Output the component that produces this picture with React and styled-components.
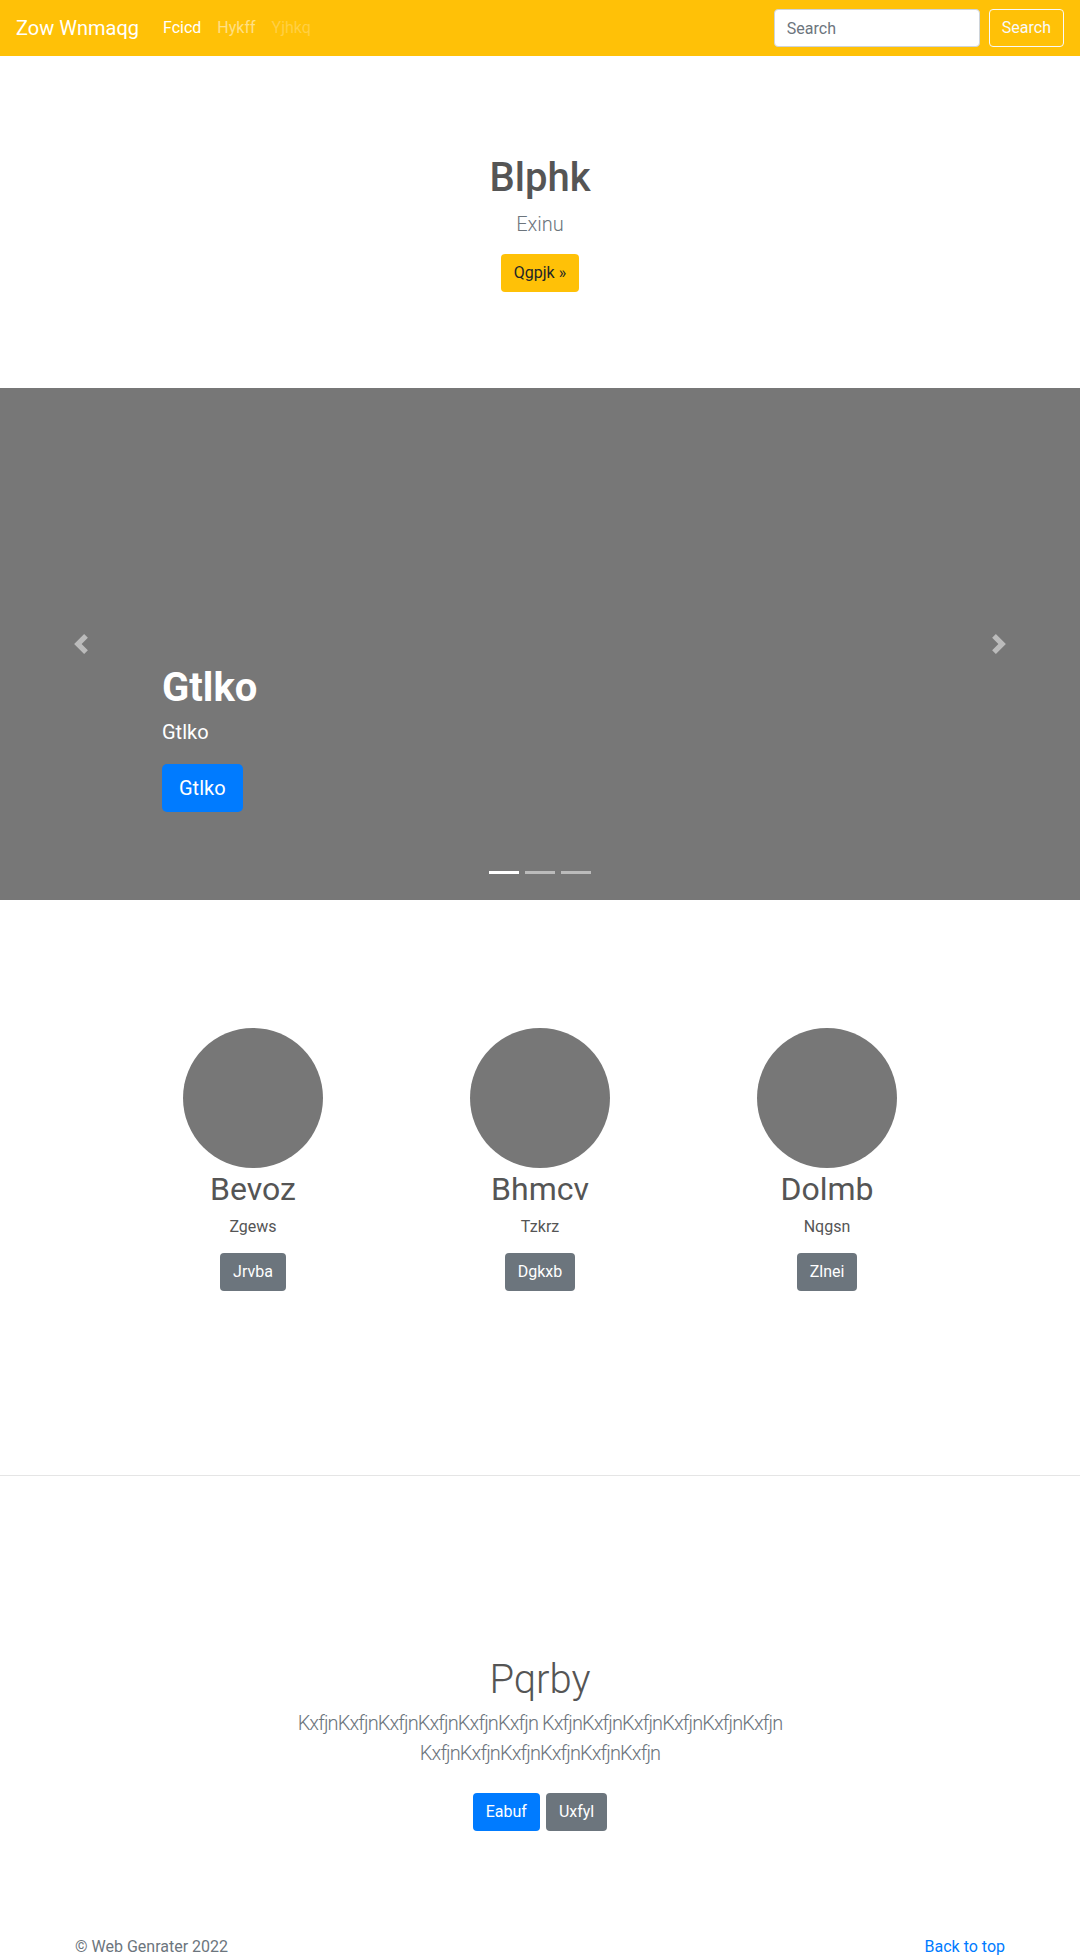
import styled, { createGlobalStyle } from "styled-components"

const GlobalStyle = createGlobalStyle`
  * { box-sizing: border-box; }
  body {
    margin: 0;
    font-family: "Segoe UI", Roboto, "Noto Sans", "Liberation Sans", sans-serif;
    font-size: 16px;
    line-height: 1.5;
    color: #555;
    background: #fff;
  }
`

const Navbar = styled.nav`
  display: flex;
  align-items: center;
  height: 56px;
  padding: 8px 16px;
  background: #ffc107;
`
const Brand = styled.a`
  font-size: 20px;
  line-height: 30px;
  color: #fff;
  margin-right: 16px;
  text-decoration: none;
`
const NavList = styled.ul`
  display: flex;
  list-style: none;
  margin: 0;
  padding: 0;
  flex: 1;
`
const NavLink = styled.a`
  display: block;
  padding: 8px;
  line-height: 24px;
  text-decoration: none;
  color: ${p => (p.$state === "active" ? "#fff" : p.$state === "disabled" ? "rgba(255,255,255,.25)" : "rgba(255,255,255,.5)")};
`
const SearchForm = styled.form`
  display: flex;
  align-items: center;
  gap: 9px;
`
const SearchInput = styled.input`
  width: 206px;
  height: 38px;
  padding: 6px 12px;
  font: inherit;
  color: #495057;
  border: 1px solid #ced4da;
  border-radius: 4px;
  background: #fff;
  &::placeholder { color: #6c757d; }
`
const OutlineButton = styled.button`
  height: 38px;
  padding: 6px 12px;
  font: inherit;
  line-height: 24px;
  color: #f8f9fa;
  background: transparent;
  border: 1px solid #f8f9fa;
  border-radius: 4px;
`

const Button = styled.a`
  display: inline-block;
  padding: ${p => (p.$lg ? "8px 16px" : "6px 12px")};
  font-size: ${p => (p.$lg ? "20px" : "16px")};
  line-height: ${p => (p.$lg ? "30px" : "24px")};
  border: 1px solid transparent;
  border-radius: ${p => (p.$lg ? "5px" : "4px")};
  text-decoration: none;
  color: ${p => (p.$variant === "warning" ? "#212529" : "#fff")};
  background: ${p => ({ warning: "#ffc107", primary: "#007bff", secondary: "#6c757d" }[p.$variant])};
`

const Hero = styled.section`
  display: flex;
  flex-direction: column;
  align-items: center;
  padding: 98px 15px 96px;
  text-align: center;
`
const HeroTitle = styled.h1`
  margin: 0 0 7px;
  font-size: 40px;
  line-height: 48px;
  font-weight: 500;
  color: #555;
`
const Lead = styled.p`
  margin: 0 0 ${p => p.$mb || 15}px;
  font-size: 20px;
  line-height: 30px;
  font-weight: 300;
  color: #6c757d;
  letter-spacing: ${p => p.$tight ? "-0.9px" : "normal"};
`

const Carousel = styled.div`
  position: relative;
  height: 512px;
  background: #777;
`
const Caption = styled.div`
  position: absolute;
  left: 15%;
  right: 15%;
  bottom: 88px;
  color: #fff;
`
const CaptionTitle = styled.h1`
  margin: 0 0 5px;
  font-size: 40px;
  line-height: 48px;
  font-weight: 700;
`
const CaptionText = styled.p`
  margin: 0 0 17px;
  font-size: 20px;
  line-height: 30px;
`
const Control = styled.a`
  position: absolute;
  top: 0;
  bottom: 0;
  ${p => (p.$side === "left" ? "left: 0;" : "right: 0;")}
  width: 15%;
  display: flex;
  align-items: center;
  justify-content: center;
  opacity: .5;
  svg { width: 20px; height: 20px; }
`
const Indicators = styled.ol`
  position: absolute;
  left: 0;
  right: 0;
  bottom: 26px;
  display: flex;
  justify-content: center;
  gap: 6px;
  list-style: none;
  margin: 0;
  padding: 0;
`
const Indicator = styled.li`
  width: 30px;
  height: 3px;
  background: #fff;
  opacity: ${p => (p.$active ? 1 : 0.5)};
`

const Marketing = styled.section`
  padding: 128px 0 184px;
  border-bottom: 1px solid rgba(0, 0, 0, .1);
`
const Columns = styled.div`
  display: grid;
  grid-template-columns: repeat(3, 1fr);
  width: 861px;
  margin: 0 auto;
`
const Column = styled.div`
  display: flex;
  flex-direction: column;
  align-items: center;
  text-align: center;
`
const Avatar = styled.div`
  width: 140px;
  height: 140px;
  border-radius: 50%;
  background: #777;
`
const ColTitle = styled.h2`
  margin: 2px 0 0;
  font-size: 32px;
  line-height: 38px;
  font-weight: 400;
  color: #555;
`
const ColText = styled.p`
  margin: 7px 0 14px;
  line-height: 24px;
  color: #555;
`

const Album = styled.section`
  padding: 180px 15px 52px;
  text-align: center;
`
const AlbumInner = styled.div`
  max-width: 610px;
  margin: 0 auto;
`
const AlbumTitle = styled.h1`
  margin: 0 0 4px;
  font-size: 40px;
  line-height: 48px;
  font-weight: 300;
  color: #555;
`
const ButtonRow = styled.div`
  display: flex;
  justify-content: center;
  gap: 6px;
`

const Footer = styled.footer`
  max-width: 960px;
  margin: 0 auto;
  padding: 52px 15px 0;
  display: flex;
  justify-content: space-between;
  color: #6c757d;
  line-height: 24px;
  a { color: #007bff; text-decoration: none; }
`

const Chevron = ({ dir }) => (
  <svg viewBox="0 0 8 8" fill="#fff">
    {dir === "left"
      ? <path d="M5.25 0l-4 4 4 4 1.5-1.5L4.25 4l2.5-2.5L5.25 0z" />
      : <path d="M2.75 0l-1.5 1.5L3.75 4l-2.5 2.5L2.75 8l4-4-4-4z" />}
  </svg>
)

const people = [
  { name: "Bevoz", text: "Zgews", action: "Jrvba" },
  { name: "Bhmcv", text: "Tzkrz", action: "Dgkxb" },
  { name: "Dolmb", text: "Nqgsn", action: "Zlnei" },
]

const App = () => {
  const word = "KxfjnKxfjnKxfjnKxfjnKxfjnKxfjn"
  return (
    <>
      <GlobalStyle />
      <Navbar>
        <Brand href="#">Zow Wnmaqg</Brand>
        <NavList>
          <li><NavLink $state="active" href="#">Fcicd</NavLink></li>
          <li><NavLink href="#">Hykff</NavLink></li>
          <li><NavLink $state="disabled" href="#">Yjhkq</NavLink></li>
        </NavList>
        <SearchForm onSubmit={e => e.preventDefault()}>
          <SearchInput type="text" placeholder="Search" />
          <OutlineButton type="submit">Search</OutlineButton>
        </SearchForm>
      </Navbar>

      <Hero>
        <HeroTitle>Blphk</HeroTitle>
        <Lead>Exinu</Lead>
        <Button $variant="warning" href="#">Qgpjk »</Button>
      </Hero>

      <Carousel>
        <Caption>
          <CaptionTitle>Gtlko</CaptionTitle>
          <CaptionText>Gtlko</CaptionText>
          <Button $lg $variant="primary" href="#">Gtlko</Button>
        </Caption>
        <Control $side="left" href="#"><Chevron dir="left" /></Control>
        <Control $side="right" href="#"><Chevron dir="right" /></Control>
        <Indicators>
          <Indicator $active />
          <Indicator />
          <Indicator />
        </Indicators>
      </Carousel>

      <Marketing>
        <Columns>
          {people.map(p => (
            <Column key={p.name}>
              <Avatar />
              <ColTitle>{p.name}</ColTitle>
              <ColText>{p.text}</ColText>
              <Button $variant="secondary" href="#">{p.action}</Button>
            </Column>
          ))}
        </Columns>
      </Marketing>

      <Album>
        <AlbumInner>
          <AlbumTitle>Pqrby</AlbumTitle>
          <Lead $tight $mb={25}>{word} {word} {word}</Lead>
          <ButtonRow>
            <Button $variant="primary" href="#">Eabuf</Button>
            <Button $variant="secondary" href="#">Uxfyl</Button>
          </ButtonRow>
        </AlbumInner>
      </Album>

      <Footer>
        <span>© Web Genrater 2022</span>
        <a href="#">Back to top</a>
      </Footer>
    </>
  )
}

export default App
